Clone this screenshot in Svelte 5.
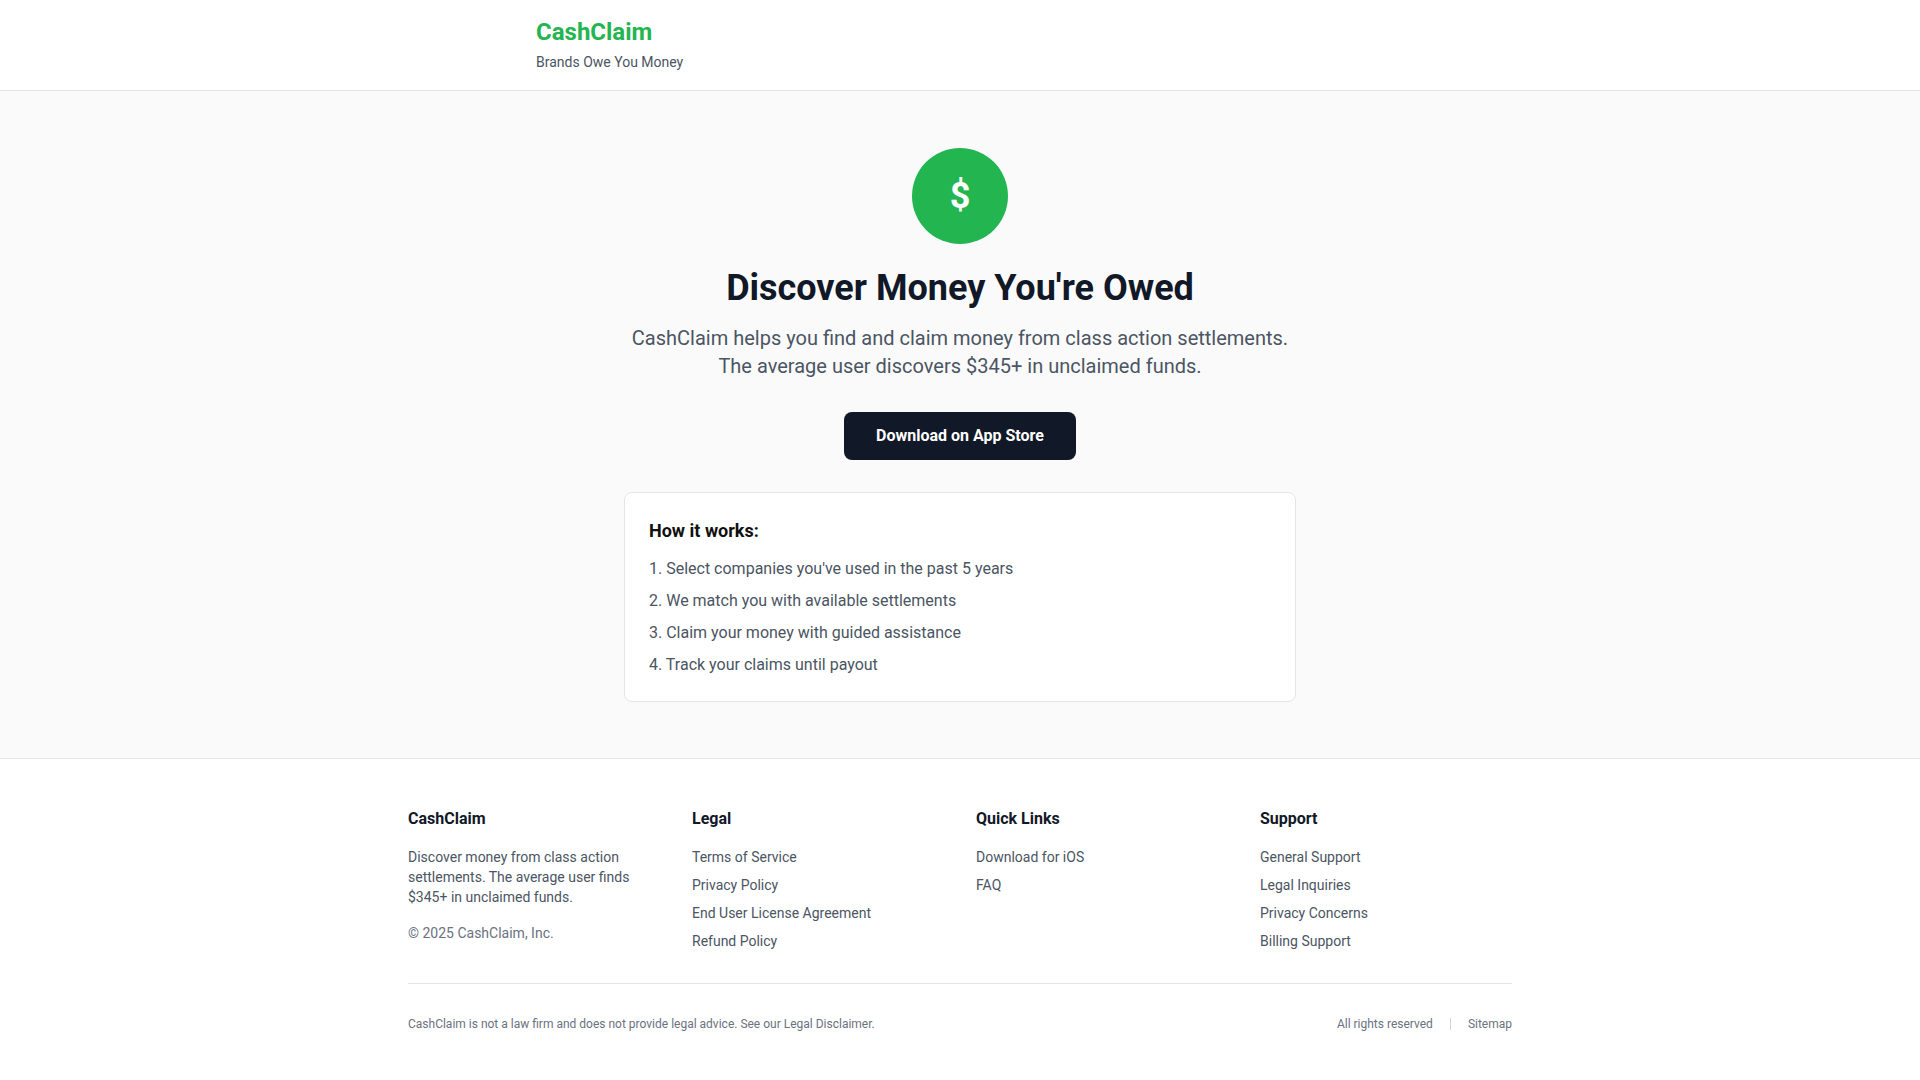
<script lang="ts">
  const steps = [
    "Select companies you've used in the past 5 years",
    'We match you with available settlements',
    'Claim your money with guided assistance',
    'Track your claims until payout'
  ];

  const linkGroups = [
    {
      title: 'Legal',
      links: [
        { label: 'Terms of Service', href: '#terms' },
        { label: 'Privacy Policy', href: '#privacy' },
        { label: 'End User License Agreement', href: '#eula' },
        { label: 'Refund Policy', href: '#refunds' }
      ]
    },
    {
      title: 'Quick Links',
      links: [
        { label: 'Download for iOS', href: '#download' },
        { label: 'FAQ', href: '#faq' }
      ]
    },
    {
      title: 'Support',
      links: [
        { label: 'General Support', href: '#support' },
        { label: 'Legal Inquiries', href: '#legal-inquiries' },
        { label: 'Privacy Concerns', href: '#privacy-concerns' },
        { label: 'Billing Support', href: '#billing' }
      ]
    }
  ];
</script>

<header class="site-header">
  <div class="header-inner">
    <a class="brand" href="#home">CashClaim</a>
    <p class="tagline">Brands Owe You Money</p>
  </div>
</header>

<main class="hero">
  <div class="hero-inner">
    <div class="logo">$</div>
    <h1>Discover Money You're Owed</h1>
    <p class="lead">
      CashClaim helps you find and claim money from class action settlements. The average user
      discovers $345+ in unclaimed funds.
    </p>
    <a class="download" href="#download">Download on App Store</a>

    <section class="card">
      <h2>How it works:</h2>
      <ol>
        {#each steps as step, i}
          <li>{i + 1}. {step}</li>
        {/each}
      </ol>
    </section>
  </div>
</main>

<footer class="site-footer">
  <div class="footer-inner">
    <div class="columns">
      <div>
        <h3>CashClaim</h3>
        <p class="about">
          Discover money from class action settlements. The average user finds $345+ in unclaimed
          funds.
        </p>
        <p class="copyright">© 2025 CashClaim, Inc.</p>
      </div>
      {#each linkGroups as group}
        <nav aria-label={group.title}>
          <h3>{group.title}</h3>
          <ul>
            {#each group.links as link}
              <li><a href={link.href}>{link.label}</a></li>
            {/each}
          </ul>
        </nav>
      {/each}
    </div>

    <div class="bottom">
      <p>
        CashClaim is not a law firm and does not provide legal advice. See our
        <a href="#disclaimer">Legal Disclaimer</a>.
      </p>
      <div class="bottom-links">
        <span>All rights reserved</span>
        <span class="separator"></span>
        <a href="#sitemap">Sitemap</a>
      </div>
    </div>
  </div>
</footer>

<style>
  :global(body) {
    margin: 0;
    background: #ffffff;
    color: #111111;
    font-family: Roboto, 'Liberation Sans', sans-serif;
    font-size: 16px;
    line-height: 24px;
  }
  h1,
  h2,
  h3,
  p,
  ol,
  ul {
    margin: 0;
    padding: 0;
  }
  ol,
  ul {
    list-style: none;
  }
  a {
    color: inherit;
    text-decoration: none;
  }

  /* Header */
  .site-header {
    background: #ffffff;
    border-bottom: 1px solid #e5e5e5;
  }
  .header-inner {
    box-sizing: border-box;
    max-width: 896px;
    margin: 0 auto;
    padding: 16px 24px 18px;
  }
  .brand {
    display: block;
    color: #22b550;
    font-size: 24px;
    font-weight: 700;
    line-height: 32px;
  }
  .tagline {
    margin-top: 4px;
    color: #4b5563;
    font-size: 14px;
    line-height: 20px;
  }

  /* Hero */
  .hero {
    background: #fafafa;
  }
  .hero-inner {
    box-sizing: border-box;
    display: flex;
    flex-direction: column;
    align-items: center;
    max-width: 720px;
    margin: 0 auto;
    padding: 57px 24px 56px;
    text-align: center;
  }
  .logo {
    display: flex;
    align-items: center;
    justify-content: center;
    width: 96px;
    height: 96px;
    border-radius: 50%;
    background: #22b550;
    color: #ffffff;
    font-size: 36px;
    font-weight: 700;
    line-height: 40px;
  }
  h1 {
    margin-top: 24px;
    color: #111827;
    font-size: 36px;
    font-weight: 700;
    line-height: 40px;
  }
  .lead {
    margin-top: 16px;
    color: #4b5563;
    font-size: 20px;
    line-height: 28px;
  }
  .download {
    margin-top: 32px;
    padding: 12px 32px;
    border-radius: 8px;
    background: #111827;
    color: #ffffff;
    font-weight: 700;
  }
  .card {
    box-sizing: border-box;
    width: 100%;
    margin-top: 32px;
    padding: 24px;
    border: 1px solid #e5e5e5;
    border-radius: 8px;
    background: #ffffff;
    text-align: left;
  }
  .card h2 {
    font-size: 18px;
    font-weight: 700;
    line-height: 28px;
  }
  .card ol {
    display: grid;
    gap: 8px;
    margin-top: 12px;
    color: #4b5563;
  }

  /* Footer */
  .site-footer {
    background: #ffffff;
    border-top: 1px solid #e5e5e5;
  }
  .footer-inner {
    box-sizing: border-box;
    max-width: 1200px;
    margin: 0 auto;
    padding: 48px 48px 32px;
  }
  .columns {
    display: grid;
    grid-template-columns: repeat(4, 1fr);
    gap: 32px;
    color: #4b5563;
    font-size: 14px;
    line-height: 20px;
  }
  h3 {
    margin-bottom: 16px;
    color: #111827;
    font-size: 16px;
    font-weight: 700;
    line-height: 24px;
  }
  .columns ul {
    display: grid;
    gap: 8px;
  }
  .copyright {
    margin-top: 16px;
    color: #6b7280;
  }
  .bottom {
    display: flex;
    flex-wrap: wrap;
    justify-content: space-between;
    gap: 16px;
    margin-top: 32px;
    padding-top: 32px;
    border-top: 1px solid #e5e5e5;
    color: #6b7280;
    font-size: 12px;
    line-height: 16px;
  }
  .bottom-links {
    display: flex;
    align-items: center;
    gap: 17px;
  }
  .separator {
    width: 1px;
    height: 12px;
    background: #d1d5db;
  }

  @media (max-width: 800px) {
    .columns {
      grid-template-columns: repeat(2, 1fr);
    }
  }
</style>
